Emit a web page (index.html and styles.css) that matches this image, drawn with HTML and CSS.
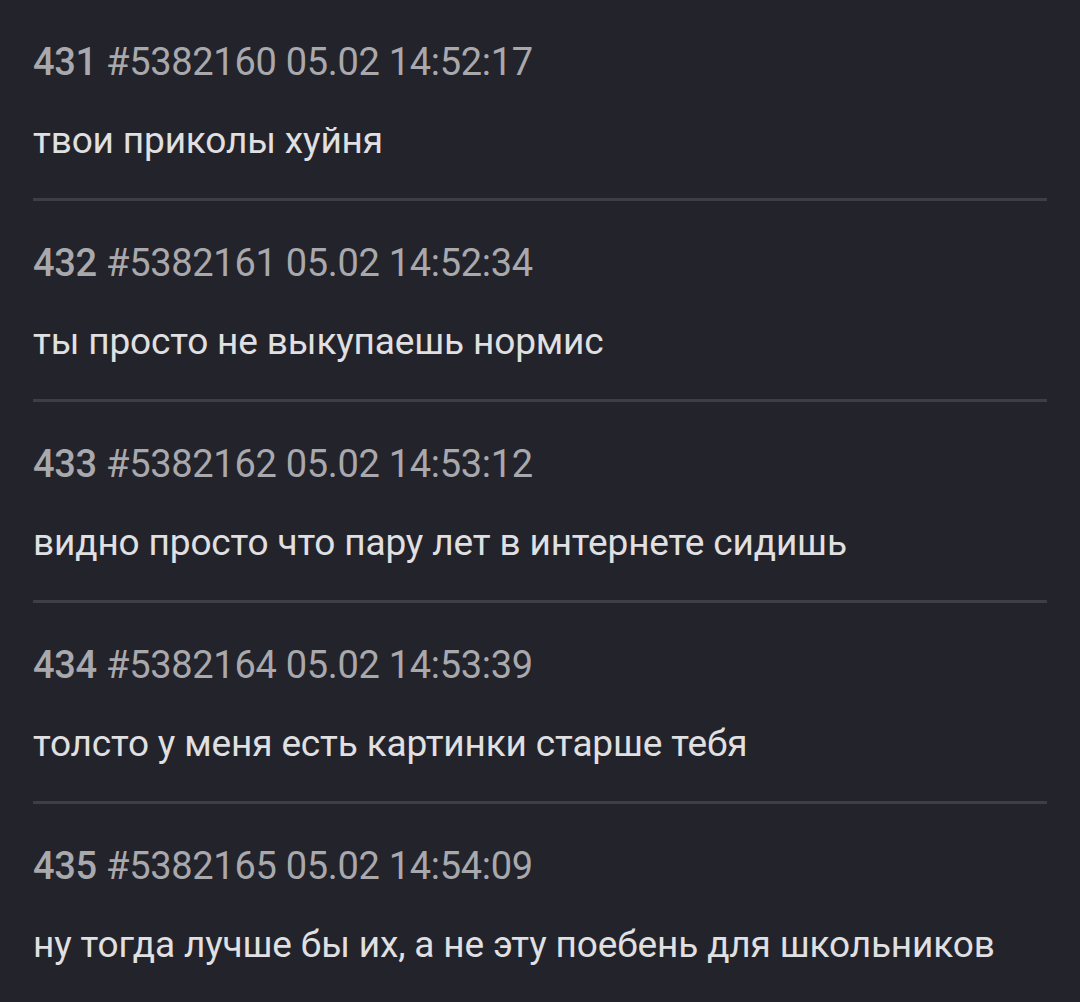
FILE: index.html
```html
<!DOCTYPE html>
<html lang="ru">
<head>
    <meta charset="UTF-8">
    <title>Тред</title>
    <link rel="stylesheet" href="styles.css">
</head>
<body>
<div id="thread">
    <div class="post">
        <div class="post-head"><span class="num">431</span> #5382160 05.02 14:52:17</div>
        <div class="post-text">твои приколы хуйня</div>
    </div>
    <div class="post">
        <div class="post-head"><span class="num">432</span> #5382161 05.02 14:52:34</div>
        <div class="post-text">ты просто не выкупаешь нормис</div>
    </div>
    <div class="post">
        <div class="post-head"><span class="num">433</span> #5382162 05.02 14:53:12</div>
        <div class="post-text">видно просто что пару лет в интернете сидишь</div>
    </div>
    <div class="post">
        <div class="post-head"><span class="num">434</span> #5382164 05.02 14:53:39</div>
        <div class="post-text">толсто у меня есть картинки старше тебя</div>
    </div>
    <div class="post">
        <div class="post-head"><span class="num">435</span> #5382165 05.02 14:54:09</div>
        <div class="post-text">ну тогда лучше бы их, а не эту поебень для школьников</div>
    </div>
</div>
</body>
</html>
```

FILE: styles.css
```css
*{
    margin: 0;padding: 0;
}
html,body{
    background: #23232b;
    height: 100%;
}
body{
    font-family: Roboto, "Noto Sans", sans-serif;
    overflow: hidden;
}
#thread{
    padding: 0 33px;
}
.post{
    padding: 37.5px 0 33.5px;
    border-bottom: 3px solid #3e3e48;
}
.post-head{
    font-size: 38px;
    line-height: 48px;
    letter-spacing: -0.3px;
    color: #a9a9ad;
}
.post-head .num{font-weight: 500}
.post-text{
    margin-top: 31px;
    font-size: 37px;
    line-height: 48px;
    letter-spacing: -0.15px;
    color: #e0e0e2;
}
```
